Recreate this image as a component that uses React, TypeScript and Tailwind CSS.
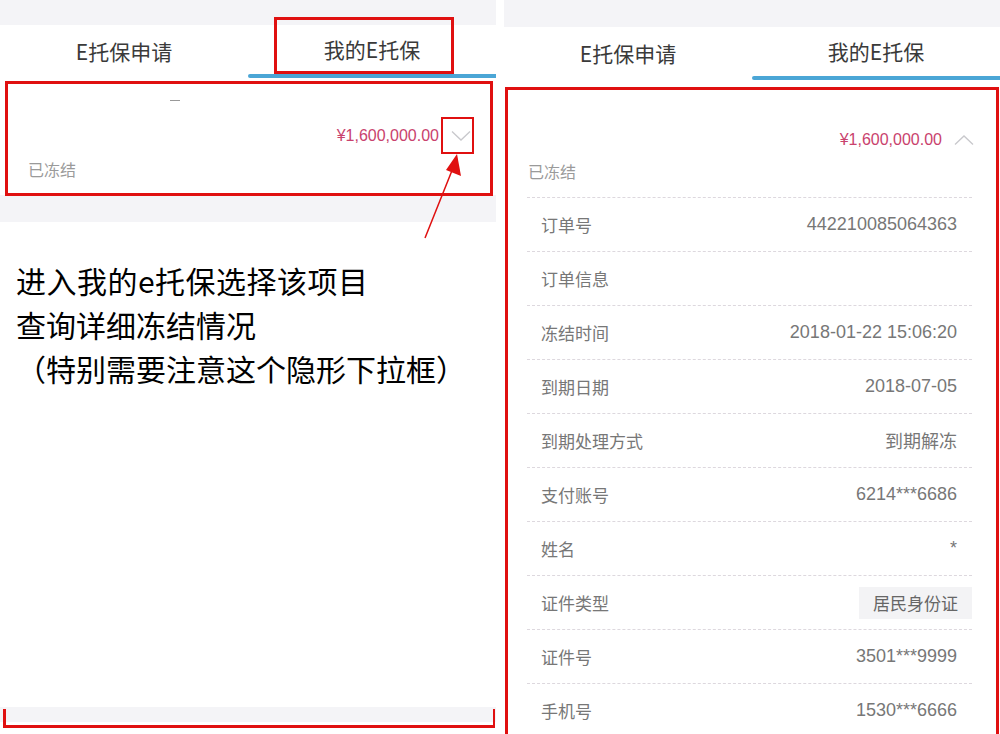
import React from "react";

const font = { fontFamily: '"Noto Sans CJK SC", "Noto Sans", sans-serif' };
const latin = { fontFamily: '"Liberation Sans", "Noto Sans CJK SC", sans-serif' };

const rows: [string, string, boolean?][] = [
  ["订单号", "442210085064363"],
  ["订单信息", ""],
  ["冻结时间", "2018-01-22 15:06:20"],
  ["到期日期", "2018-07-05"],
  ["到期处理方式", "到期解冻"],
  ["支付账号", "6214***6686"],
  ["姓名", "*"],
  ["证件类型", "居民身份证", true],
  ["证件号", "3501***9999"],
  ["手机号", "1530***6666"],
];

function Tabs({ top }: { top: number }) {
  return (
    <div className="flex flex-col">
      <div className="bg-[#f4f4f7]" style={{ height: top }} />
      <div className="flex h-[53px] bg-white">
        <div className="flex-1 flex items-center justify-center text-[21px] text-[#3a3a3a]">E托保申请</div>
        <div className="flex-1 flex flex-col">
          <div className="flex-1 flex items-center justify-center text-[21px] text-[#3a3a3a]">我的E托保</div>
          <div className="h-[4px] bg-[#4ba6d6] rounded-l-sm" />
        </div>
      </div>
    </div>
  );
}

function ChevronDown() {
  return (
    <svg width="20" height="12" viewBox="0 0 20 12" fill="none">
      <path d="M1 1.5 L10 10 L19 1.5" stroke="#c8c8cc" strokeWidth="1.3" />
    </svg>
  );
}
function ChevronUp() {
  return (
    <svg width="20" height="12" viewBox="0 0 20 12" fill="none">
      <path d="M1 10.5 L10 2 L19 10.5" stroke="#c8c8cc" strokeWidth="1.3" />
    </svg>
  );
}

export default function App() {
  return (
    <div className="w-[1000px] h-[734px] bg-white flex overflow-hidden" style={font}>
      {/* Left panel */}
      <div className="relative w-[496px] h-full flex flex-col">
        <Tabs top={25} />
        <div className="bg-white h-[117px] flex flex-col pt-[22px]">
          <div className="pl-[170px] h-[4px]">
            <div className="w-[10px] h-[1px] bg-[#999]" />
          </div>
          <div className="flex justify-end items-center pr-[25px] mt-[20px] h-[24px]">
            <span className="text-[16px] text-[#c9426d]" style={latin}>¥1,600,000.00</span>
            <span className="ml-[12px] flex items-center"><ChevronDown /></span>
          </div>
          <div className="pl-[28px] mt-[9px] text-[16px] text-[#9a9a9a]">已冻结</div>
        </div>
        <div className="h-[27px] bg-[#f4f4f7]" />
        <div className="flex-1 bg-white pt-[36px] pl-[16px] flex flex-col">
          <div className="text-[30px] leading-[44px] text-black tracking-[0.5px]">进入我的e托保选择该项目</div>
          <div className="text-[30px] leading-[44px] text-black">查询详细冻结情况</div>
          <div className="text-[30px] leading-[44px] text-black">（特别需要注意这个隐形下拉框）</div>
        </div>
        <div className="h-[15px] bg-[#f4f4f7] mb-[12px]" />

        {/* annotations */}
        <div className="absolute left-[274px] top-[17px] w-[180px] h-[57px] border-[3px] border-[#e01010]" />
        <div className="absolute left-[5px] top-[81px] w-[488px] h-[115px] border-[3px] border-[#e01010]" />
        <div className="absolute left-[441px] top-[117px] w-[33px] h-[37px] border-2 border-[#e01010]" />
        <div className="absolute left-[3px] top-[709px] w-[492px] h-[19px] border-l-[3px] border-r-[2px] border-b-[3px] border-[#e01010]" />
        <svg className="absolute left-[415px] top-[148px]" width="60" height="95" viewBox="0 0 60 95">
          <line x1="10" y1="90" x2="38" y2="20" stroke="#e01010" strokeWidth="1.5" />
          <polygon points="42,6 46,28 31,22" fill="#e01010" />
        </svg>
      </div>

      <div className="w-[8px]" />

      {/* Right panel */}
      <div className="relative w-[496px] h-full flex flex-col">
        <Tabs top={27} />
        <div className="h-[7px] bg-[#f7f7f9]" />
        <div className="flex-1 bg-white flex flex-col">
          <div className="flex justify-end items-center pr-[26px] pt-[49px] h-[71px]">
            <span className="text-[16px] text-[#c9426d]" style={latin}>¥1,600,000.00</span>
            <span className="ml-[12px] flex items-center"><ChevronUp /></span>
          </div>
          <div className="pl-[24px] mt-[8px] text-[16px] text-[#9a9a9a] leading-[24px]">已冻结</div>
          <div className="mt-[14px] ml-[23px] mr-[28px] flex flex-col">
            {rows.map(([k, v, boxed]) => (
              <div key={k} className="h-[54px] border-t border-dashed border-[#ddd8de] flex items-center justify-between">
                <span className="pl-[14px] text-[17px] text-[#777]">{k}</span>
                {boxed ? (
                  <span className="h-[32px] px-[14px] bg-[#f3f3f5] flex items-center text-[17px] text-[#666]">{v}</span>
                ) : (
                  <span className="pr-[15px] text-[18px] text-[#777]" style={/[0-9*]/.test(v) ? latin : undefined}>{v}</span>
                )}
              </div>
            ))}
          </div>
        </div>
        <div className="absolute left-[1px] top-[87px] w-[494px] h-[660px] border-[3px] border-[#e01010]" />
      </div>
    </div>
  );
}
